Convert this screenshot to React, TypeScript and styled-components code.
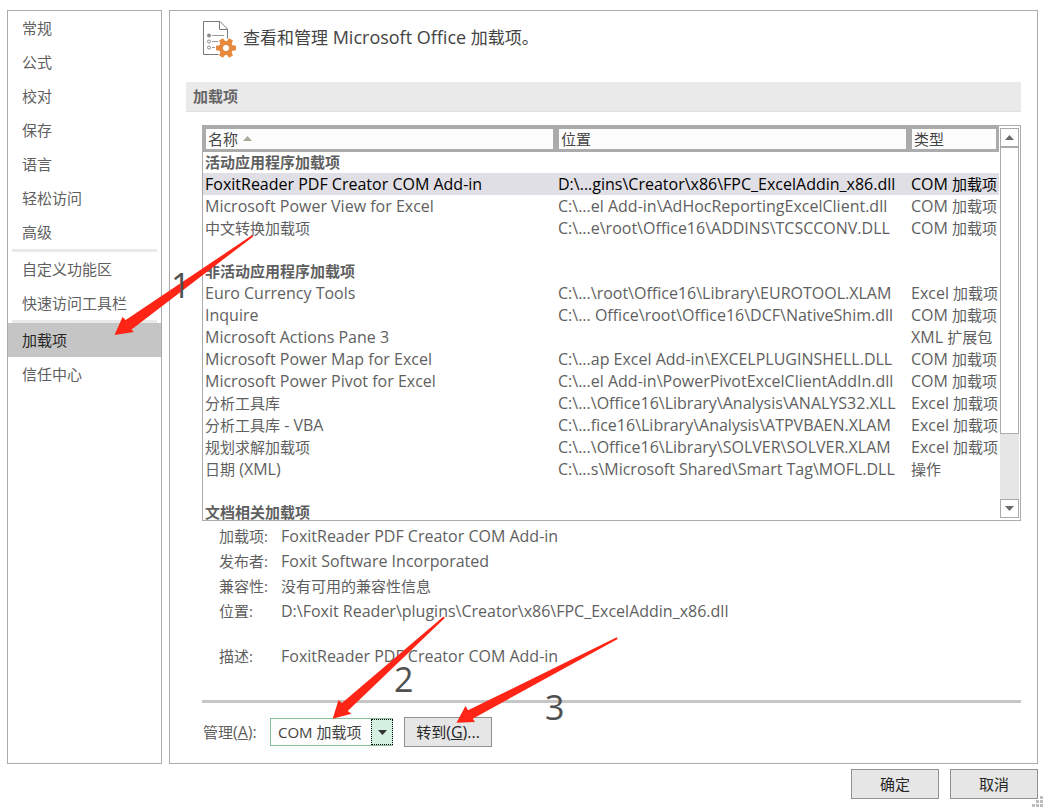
import React from "react";
import styled, { createGlobalStyle, css } from "styled-components";

const line = "#ababab";

const GlobalStyle = createGlobalStyle`
  * { box-sizing: border-box; }
  body {
    margin: 0;
    background: #fff;
    color: #5f5f5f;
    font-family: "Open Sans", "Noto Sans CJK SC", sans-serif;
    font-size: 15px;
    line-height: 22px;
  }
  button, select { font: inherit; color: #262626; }
`;

const Latin = styled.span<{ $large?: boolean }>`
  font-size: ${(p) => (p.$large ? 18 : 16)}px;
  line-height: 1;
`;

const Dialog = styled.div`
  position: relative;
  padding: 10px 7px;
`;

const Columns = styled.div`
  display: grid;
  grid-template-columns: 155px minmax(0, 1fr);
  gap: 7px;
`;

const Nav = styled.nav`
  border: 1px solid ${line};
`;

const NavItem = styled.a<{ $active?: boolean }>`
  display: block;
  padding-left: 14px;
  line-height: 34px;
  color: ${(p) => (p.$active ? "#262626" : "#5f5f5f")};
  background: ${(p) => (p.$active ? "#c5c5c5" : "transparent")};
  text-decoration: none;
`;

const NavDivider = styled.hr`
  height: 3px;
  margin: 0 4px;
  border: 0;
  background: #e9e9e9;
`;

const Panel = styled.main`
  border: 1px solid ${line};
  padding: 10px 16px 16px;
`;

const Heading = styled.header`
  display: flex;
  gap: 6px;
  height: 61px;
  padding-left: 17px;
`;

const Title = styled.h1`
  margin: 0;
  font-size: 17px;
  line-height: 34px;
  font-weight: 400;
  color: #444;
`;

const SectionTitle = styled.h2`
  margin: 0 0 13px;
  padding-left: 7px;
  border-bottom: 1px solid #e0e0e0;
  background: #eaeaea;
  font-size: 15px;
  line-height: 29px;
  font-weight: 700;
  color: #666;
`;

const Content = styled.div`
  padding-left: 16px;
`;

const ListFrame = styled.div`
  display: flex;
  height: 396px;
  border: 1px solid ${line};
  overflow: hidden;
`;

const TableArea = styled.div`
  flex: 1;
  min-width: 0;
  overflow: hidden;
`;

const Table = styled.table`
  width: 100%;
  table-layout: fixed;
  border-collapse: separate;
  border-spacing: 0;
  white-space: nowrap;
`;

const HeadCell = styled.th<{ $width?: number }>`
  width: ${(p) => (p.$width ? `${p.$width}px` : "auto")};
  height: 26px;
  padding: 0 2px;
  border: 3px solid ${line};
  background: #fdfdfd;
  font-weight: 400;
  line-height: 20px;
  text-align: left;
  color: #444;
`;

const SortMark = styled.svg`
  margin-left: 5px;
  vertical-align: 4px;
`;

const Cell = styled.td`
  height: 22px;
  padding: 0 0 0 2px;
`;

const GroupCell = styled.th<{ $first?: boolean }>`
  height: ${(p) => (p.$first ? 21 : 22)}px;
  padding: 0 0 0 2px;
  line-height: 21px;
  font-weight: 700;
  text-align: left;
`;

const BlankCell = styled.td`
  height: 21px;
  padding: 0;
`;

const Row = styled.tr<{ $selected?: boolean }>`
  ${(p) =>
    p.$selected &&
    css`
      background: #e0dfe5;
      color: #000;
    `}
`;

const Scrollbar = styled.div`
  display: flex;
  flex-direction: column;
  width: 19px;
  margin: 2px 1px;
  background: #e6e6e6;
`;

const ScrollButton = styled.button`
  display: flex;
  align-items: center;
  justify-content: center;
  height: 19px;
  padding: 0;
  border: 1px solid ${line};
  background: #fff;
`;

const Thumb = styled.div`
  height: 287px;
  margin-bottom: auto;
  border: 1px solid ${line};
  background: #fff;
`;

const Details = styled.dl`
  display: grid;
  grid-template-columns: 62px 1fr;
  margin: 0;
  padding: 3px 0 31px 17px;
  line-height: 25px;
`;

const Term = styled.dt<{ $gap?: boolean }>`
  margin-top: ${(p) => (p.$gap ? 20 : 0)}px;
`;

const Value = styled.dd<{ $gap?: boolean }>`
  margin: ${(p) => (p.$gap ? 20 : 0)}px 0 0;
`;

const Rule = styled.hr`
  height: 3px;
  margin: 0 0 14px;
  border: 0;
  background: #c6c6c6;
`;

const ManageRow = styled.div`
  display: flex;
  align-items: center;
`;

const ManageLabel = styled.label`
  width: 68px;
  padding-left: 1px;
`;

const SelectBox = styled.div`
  position: relative;
  width: 123px;
  margin-right: 11px;
`;

const Select = styled.select`
  display: block;
  width: 100%;
  height: 28px;
  padding: 0 0 0 7px;
  border: 1px solid #86bfa0;
  border-radius: 0;
  background: #fdfdfd;
  color: #444;
  appearance: none;
`;

const SelectArrow = styled.span`
  position: absolute;
  top: 1px;
  right: 0;
  bottom: 1px;
  width: 22px;
  display: flex;
  align-items: center;
  justify-content: center;
  border: 1px dotted #000;
  background: #d3f0e0;
  pointer-events: none;
`;

const Button = styled.button`
  width: 88px;
  height: 30px;
  padding: 0;
  border: 1px solid #919191;
  background: #e6e6e6;
`;

const Footer = styled.footer`
  display: flex;
  justify-content: flex-end;
  gap: 11px;
  padding-top: 5px;
`;

const Grip = styled.svg`
  position: absolute;
  right: 2px;
  bottom: 2px;
`;

const Marks = styled.svg`
  position: absolute;
  top: 0;
  left: 0;
  pointer-events: none;
`;

const Step = styled.text`
  font-size: 34px;
  fill: #505050;
`;

const Mixed = ({ text, large }: { text: string; large?: boolean }) => (
  <>
    {text.split(/([ -~]+)/).map((part, i) =>
      i % 2 ? <Latin key={i} $large={large}>{part}</Latin> : part
    )}
  </>
);

const Triangle = ({ up, color = "#6b6b6b" }: { up?: boolean; color?: string }) => (
  <svg width="9" height="5" viewBox="0 0 9 5" aria-hidden="true">
    <path d={up ? "M0 5L4.500 0L9 5z" : "M0 0L4.500 5L9 0z"} fill={color} />
  </svg>
);

const teeth = [30, 90, 150, 210, 270, 330];

const OptionsIcon = () => (
  <svg width="34" height="38" viewBox="0 0 34 38" fill="none" aria-hidden="true">
    <path d="M15.500 33.500H0.500V0.500H17L24.500 8V17.500M16.500 0.500V8.500H24.500" stroke="#7a7a7a" />
    <path d="M9 14.500H21M9 20.500H15M9 26.500H12" stroke="#999" />
    <circle cx="6" cy="14.500" r="2" fill="#8a8a8a" />
    <circle cx="6" cy="20.500" r="1.500" stroke="#8a8a8a" />
    <circle cx="6" cy="26.500" r="1.500" stroke="#8a8a8a" />
    <g fill="#e58a3e">
      {teeth.map((a) => (
        <path key={a} d="M20 22L20.800 17H25.200L26 22z" transform={`rotate(${a} 23 27)`} />
      ))}
    </g>
    <circle cx="23" cy="27" r="5" stroke="#e58a3e" strokeWidth="4" />
  </svg>
);

type Entry = [string, string, string];

const active: Entry[] = [
  ["FoxitReader PDF Creator COM Add-in", "D:\\...gins\\Creator\\x86\\FPC_ExcelAddin_x86.dll", "COM 加载项"],
  ["Microsoft Power View for Excel", "C:\\...el Add-in\\AdHocReportingExcelClient.dll", "COM 加载项"],
  ["中文转换加载项", "C:\\...e\\root\\Office16\\ADDINS\\TCSCCONV.DLL", "COM 加载项"],
];

const inactive: Entry[] = [
  ["Euro Currency Tools", "C:\\...\\root\\Office16\\Library\\EUROTOOL.XLAM", "Excel 加载项"],
  ["Inquire", "C:\\... Office\\root\\Office16\\DCF\\NativeShim.dll", "COM 加载项"],
  ["Microsoft Actions Pane 3", "", "XML 扩展包"],
  ["Microsoft Power Map for Excel", "C:\\...ap Excel Add-in\\EXCELPLUGINSHELL.DLL", "COM 加载项"],
  ["Microsoft Power Pivot for Excel", "C:\\...el Add-in\\PowerPivotExcelClientAddIn.dll", "COM 加载项"],
  ["分析工具库", "C:\\...\\Office16\\Library\\Analysis\\ANALYS32.XLL", "Excel 加载项"],
  ["分析工具库 - VBA", "C:\\...fice16\\Library\\Analysis\\ATPVBAEN.XLAM", "Excel 加载项"],
  ["规划求解加载项", "C:\\...\\Office16\\Library\\SOLVER\\SOLVER.XLAM", "Excel 加载项"],
  ["日期 (XML)", "C:\\...s\\Microsoft Shared\\Smart Tag\\MOFL.DLL", "操作"],
];

const Entries = ({ items, selected }: { items: Entry[]; selected?: number }) => (
  <>
    {items.map((item, i) => (
      <Row key={item[0]} $selected={i === selected}>
        {item.map((text, j) => (
          <Cell key={j}><Mixed text={text} /></Cell>
        ))}
      </Row>
    ))}
    <tr>
      <BlankCell colSpan={3} />
    </tr>
  </>
);

const details = [
  ["加载项:", "FoxitReader PDF Creator COM Add-in"],
  ["发布者:", "Foxit Software Incorporated"],
  ["兼容性:", "没有可用的兼容性信息"],
  ["位置:", "D:\\Foxit Reader\\plugins\\Creator\\x86\\FPC_ExcelAddin_x86.dll"],
  ["描述:", "FoxitReader PDF Creator COM Add-in"],
];

export default function App() {
  return (
    <Dialog>
      <GlobalStyle />
      <Columns>
        <Nav>
          {["常规", "公式", "校对", "保存", "语言", "轻松访问", "高级"].map((t) => (
            <NavItem key={t} href="#">{t}</NavItem>
          ))}
          <NavDivider />
          <NavItem href="#">自定义功能区</NavItem>
          <NavItem href="#">快速访问工具栏</NavItem>
          <NavDivider />
          <NavItem href="#" $active>加载项</NavItem>
          <NavItem href="#">信任中心</NavItem>
        </Nav>
        <Panel>
          <Heading>
            <OptionsIcon />
            <Title><Mixed text="查看和管理 Microsoft Office 加载项。" large /></Title>
          </Heading>
          <SectionTitle>加载项</SectionTitle>
          <Content>
            <ListFrame>
              <TableArea>
                <Table>
                  <thead>
                    <tr>
                      <HeadCell scope="col">
                        名称
                        <SortMark width="9" height="5" viewBox="0 0 9 5" aria-hidden="true">
                          <path d="M0 5L4.500 0L9 5z" fill="#aca899" />
                        </SortMark>
                      </HeadCell>
                      <HeadCell scope="col">位置</HeadCell>
                      <HeadCell scope="col" $width={90}>类型</HeadCell>
                    </tr>
                  </thead>
                  <tbody>
                    <tr>
                      <GroupCell colSpan={3} $first>活动应用程序加载项</GroupCell>
                    </tr>
                    <Entries items={active} selected={0} />
                    <tr>
                      <GroupCell colSpan={3}>非活动应用程序加载项</GroupCell>
                    </tr>
                    <Entries items={inactive} />
                    <tr>
                      <GroupCell colSpan={3}>文档相关加载项</GroupCell>
                    </tr>
                  </tbody>
                </Table>
              </TableArea>
              <Scrollbar>
                <ScrollButton type="button" aria-label="向上滚动"><Triangle up /></ScrollButton>
                <Thumb />
                <ScrollButton type="button" aria-label="向下滚动"><Triangle /></ScrollButton>
              </Scrollbar>
            </ListFrame>
            <Details>
              {details.map(([term, value], i) => (
                <React.Fragment key={term}>
                  <Term $gap={i === 4}>{term}</Term>
                  <Value $gap={i === 4}><Mixed text={value} /></Value>
                </React.Fragment>
              ))}
            </Details>
            <Rule />
            <ManageRow>
              <ManageLabel htmlFor="manage">管理<Latin>(<u>A</u>):</Latin></ManageLabel>
              <SelectBox>
                <Select id="manage">
                  <option>COM 加载项</option>
                </Select>
                <SelectArrow><Triangle color="#333" /></SelectArrow>
              </SelectBox>
              <Button type="button">转到<Latin>(<u>G</u>)...</Latin></Button>
            </ManageRow>
          </Content>
        </Panel>
      </Columns>
      <Footer>
        <Button type="button">确定</Button>
        <Button type="button">取消</Button>
      </Footer>
      <Grip width="11" height="11" viewBox="0 0 11 11" fill="#bdbdbd" aria-hidden="true">
        <path d="M8 0h3v3h-3zM4 4h3v3h-3zM8 4h3v3h-3zM0 8h3v3h-3zM4 8h3v3h-3zM8 8h3v3h-3z" />
      </Grip>
      <Marks width="640" height="740" viewBox="0 0 640 740">
        <g fill="#ff2516">
          <path d="M114.500 335L122.500 317L125.700 320L252 235.300L253 236.700L131.500 329.500L134 332z" />
          <path d="M332.700 718.700L338.500 700L342 703L443.500 616.500L444.800 618L347.700 711L351.500 713.700z" />
          <path d="M456.500 722.700L465.500 706L468 710.300L616.800 637.300L617.700 639L472.700 718.700L475 722z" />
        </g>
        <Step x="171" y="298">1</Step>
        <Step x="394" y="692">2</Step>
        <Step x="545" y="720">3</Step>
      </Marks>
    </Dialog>
  );
}
